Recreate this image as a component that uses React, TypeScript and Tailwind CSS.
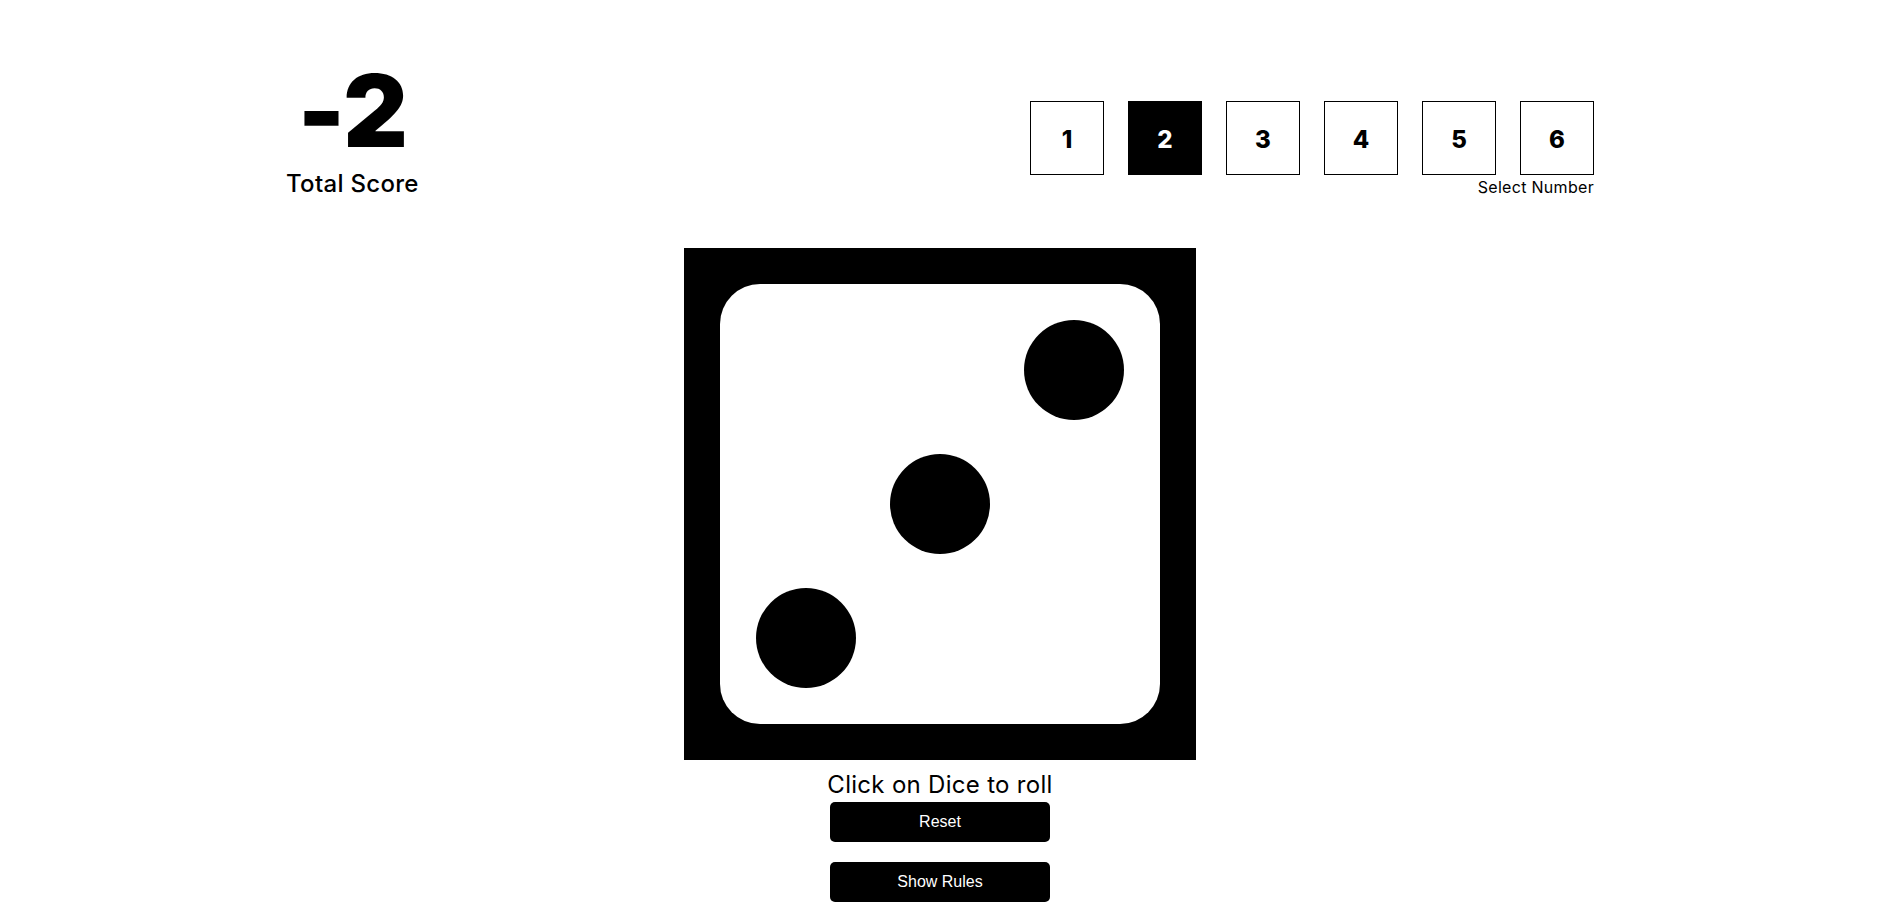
import { useState } from "react";

const faces: Record<number, [number, number][]> = {
    1: [[256, 256]],
    2: [[390, 122], [122, 390]],
    3: [[390, 122], [256, 256], [122, 390]],
    4: [[122, 122], [390, 122], [122, 390], [390, 390]],
    5: [[122, 122], [390, 122], [256, 256], [122, 390], [390, 390]],
    6: [[122, 122], [390, 122], [122, 256], [390, 256], [122, 390], [390, 390]],
};

function Dice({ value, onClick }: { value: number; onClick: () => void }) {
    return (
        <svg width="512" height="512" viewBox="0 0 512 512" onClick={onClick} className="block cursor-pointer">
            <rect x="0" y="0" width="512" height="512" fill="#000" />
            <rect x="36" y="36" width="440" height="440" rx="40" fill="#fff" />
            {faces[value].map(([cx, cy], i) => (
                <circle key={i} cx={cx} cy={cy} r="50" fill="#000" />
            ))}
        </svg>
    );
}

export default function App() {
    const [score, setScore] = useState(-2);
    const [selected, setSelected] = useState<number | null>(2);
    const [dice, setDice] = useState(3);

    const roll = () => {
        if (!selected) return;
        const n = Math.floor(Math.random() * 6) + 1;
        setDice(n);
        setScore((s) => (n === selected ? s + n : s - 2));
    };

    return (
        <div className="min-h-screen bg-white text-black pr-[6px] font-['Inter',sans-serif]">
            <div className="w-[1308px] mx-auto flex justify-between items-end pt-[61px]">
                <div className="flex flex-col items-center">
                    <h1 className="text-[100px] leading-none font-black tracking-[-1px] mb-2">{score}</h1>
                    <p className="text-[24px] leading-[30px] font-medium tracking-[0.3px]">Total Score</p>
                </div>
                <div className="flex flex-col items-end">
                    <div className="flex gap-6">
                        {[1, 2, 3, 4, 5, 6].map((n) => (
                            <button
                                key={n}
                                onClick={() => setSelected(n)}
                                className={
                                    n === selected
                                        ? "w-[74px] h-[74px] pt-[3px] border border-black bg-black text-white text-[24px] font-extrabold flex items-center justify-center"
                                        : "w-[74px] h-[74px] pt-[3px] border border-black bg-white text-black text-[24px] font-extrabold flex items-center justify-center"
                                }
                            >
                                {n}
                            </button>
                        ))}
                    </div>
                    <p className="text-[16px] leading-6 tracking-[0.3px]">Select Number</p>
                </div>
            </div>

            <div className="flex flex-col items-center mt-[49px]">
                <Dice value={dice} onClick={roll} />
                <p className="text-[24px] leading-[32px] mt-[9px] tracking-[0.3px]">Click on Dice to roll</p>
                <button
                    onClick={() => setScore(0)}
                    className="w-[220px] h-10 mt-px rounded-[5px] bg-black text-white text-[16px] font-['Liberation_Sans',Arial,sans-serif]"
                >
                    Reset
                </button>
                <button className="w-[220px] h-10 mt-5 rounded-[5px] bg-black text-white text-[16px] font-['Liberation_Sans',Arial,sans-serif]">
                    Show Rules
                </button>
            </div>
        </div>
    );
}
